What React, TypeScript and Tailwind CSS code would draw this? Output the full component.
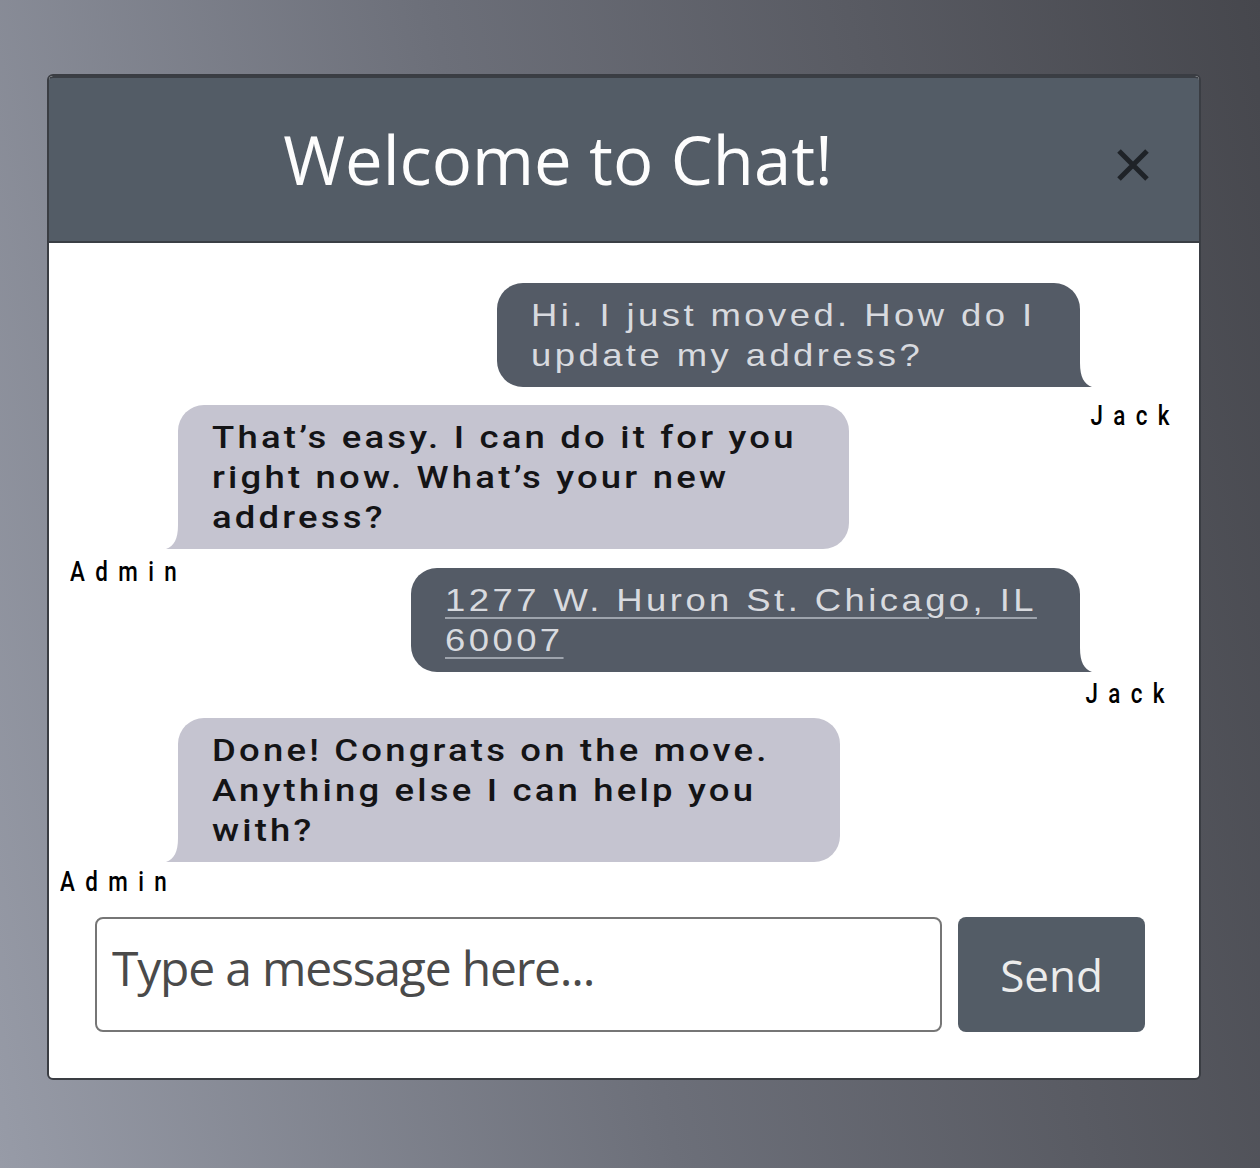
import React from 'react'
import clsx from 'clsx'

interface ChatMessage {
  id: number
  from: 'Jack' | 'Admin'
  lines: string[]
  link?: boolean
  width: string
  gap: string
  labelPos: string
}

const messages: ChatMessage[] = [
  {
    id: 1,
    from: 'Jack',
    lines: ['Hi. I just moved. How do I', 'update my address?'],
    width: 'w-[583px]',
    gap: 'mt-[40px]',
    labelPos: 'right-[19px] mt-[15px] origin-right',
  },
  {
    id: 2,
    from: 'Admin',
    lines: ['That\u2019s easy. I can do it for you', 'right now. What\u2019s your new', 'address?'],
    width: 'w-[671px]',
    gap: 'mt-[18px]',
    labelPos: 'left-[21px] mt-[9px] origin-left',
  },
  {
    id: 3,
    from: 'Jack',
    lines: ['1277 W. Huron St. Chicago, IL', '60007'],
    link: true,
    width: 'w-[669px]',
    gap: 'mt-[19px]',
    labelPos: 'right-[24px] mt-[8px] origin-right',
  },
  {
    id: 4,
    from: 'Admin',
    lines: ['Done! Congrats on the move.', 'Anything else I can help you', 'with?'],
    width: 'w-[662px]',
    gap: 'mt-[46px]',
    labelPos: 'left-[11px] mt-[6px] origin-left',
  },
]

export default function App() {
  return (
    <div className="min-h-[1168px] w-full bg-[linear-gradient(78deg,#979ba7,#6c6f79_45%,#46474d)] pt-[74px] pl-[47px] pr-[59px] pb-[88px]">
      <div className="w-[1154px] rounded-md border-2 border-[#3a3d43] bg-white overflow-hidden">
        <Header />
        <div className="flex flex-col">
          {messages.map((m) => (
            <MessageRow key={m.id} message={m} />
          ))}
          <Composer />
        </div>
      </div>
    </div>
  )
}

function Header() {
  return (
    <div className="flex h-[167px] items-center rounded-t bg-[#535c66] border-t-2 border-b-2 border-[#3a3e44]">
      <h1 className="flex-1 text-center font-['Open_Sans',sans-serif] text-[67px] leading-none text-[#fdfdfd]">
        Welcome to Chat!
      </h1>
      <button className="mt-[10px] flex w-[132px] items-center justify-center">
        <svg width="36" height="36" viewBox="0 0 36 36">
          <path d="M4 4 L32 32 M32 4 L4 32" stroke="#1f2328" strokeWidth="5" />
        </svg>
      </button>
    </div>
  )
}

function MessageRow({ message }: { message: ChatMessage }) {
  const isJack = message.from === 'Jack'

  return (
    <div
      className={clsx(
        'relative flex',
        message.gap,
        isJack ? 'justify-end pr-[119px]' : 'justify-start pl-[129px]'
      )}
    >
      <div
        className={clsx(
          'relative px-[34px] py-3 text-[32px] leading-[40px] whitespace-nowrap',
          message.width,
          isJack
            ? 'rounded-[26px] rounded-br-none bg-[#545b66] text-[#d8dadf]'
            : 'rounded-[26px] rounded-bl-none bg-[#c5c4d0] text-[#141416]'
        )}
      >
        <div
          className={clsx(
            'origin-left scale-x-[1.14]',
            isJack
              ? 'font-["Liberation_Sans",Arial,sans-serif] tracking-[3px]'
              : 'font-["Roboto","Liberation_Sans",sans-serif] font-medium tracking-[2.8px]'
          )}
        >
          {message.lines.map((line, i) => (
            <div key={i}>
              <span
                className={clsx(
                  message.link && 'underline decoration-[#9ea4ad] decoration-2 underline-offset-[6px]'
                )}
              >
                {line}
              </span>
            </div>
          ))}
        </div>

        {/* bubble tail */}
        {isJack ? (
          <svg className="absolute bottom-0 right-[-12px]" width="24" height="24" viewBox="0 0 24 24">
            <path d="M0 0 H12 C12 14 16 21 24 24 H0 Z" fill="#545b66" />
          </svg>
        ) : (
          <svg className="absolute bottom-0 left-[-12px]" width="24" height="24" viewBox="0 0 24 24">
            <path d="M24 0 H12 C12 14 8 21 0 24 H24 Z" fill="#c5c4d0" />
          </svg>
        )}
      </div>

      <span
        className={clsx(
          'absolute top-full scale-x-[0.8] text-[28px] leading-none tracking-[13px] text-black font-["Roboto","Liberation_Sans",sans-serif] font-medium',
          message.labelPos
        )}
      >
        {message.from}
      </span>
    </div>
  )
}

function Composer() {
  return (
    <div className="mt-[55px] mb-[46px] flex gap-4 pl-[46px] pr-[54px]">
      <input
        type="text"
        placeholder="Type a message here..."
        className="h-[115px] flex-1 rounded-lg border-2 border-[#767676] bg-white pl-[15px] pb-[14px] font-['Open_Sans',sans-serif] text-[48px] tracking-[-1.2px] text-[#333] placeholder:text-[#4a4a4a] outline-none"
      />
      <button className="h-[115px] w-[187px] rounded-lg bg-[#535c66] font-['Open_Sans',sans-serif] text-[44px] text-[#ececec]">
        Send
      </button>
    </div>
  )
}
